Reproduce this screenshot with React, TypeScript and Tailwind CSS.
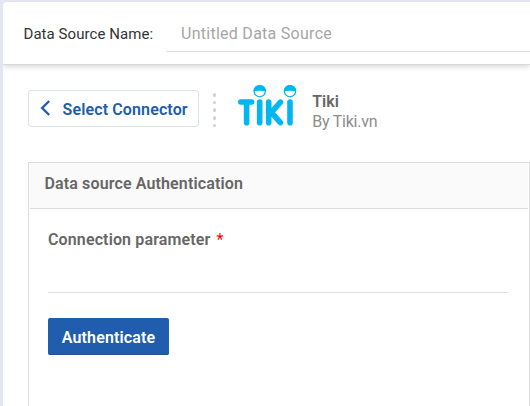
import React from "react";

function TikiLogo() {
  return (
    <svg width="60" height="44" viewBox="0 0 60 44" fill="none" className="block" aria-label="Tiki">
      <g stroke="#00b7f1" strokeWidth="5.6" strokeLinecap="round" strokeLinejoin="round">
        <path d="M3.8 18H14.6M9.6 18V38.8" />
        <path d="M22.7 18V38.8" />
        <path d="M31.7 18V38.8M43.4 18.2L34.4 28.4L43.4 38.6" />
        <path d="M53 18V38.8" />
      </g>
      <g stroke="#00b7f1" strokeWidth="1.3">
        <circle cx="22.7" cy="7.2" r="5.6" fill="#fff" />
        <circle cx="53" cy="7.2" r="5.6" fill="#fff" />
      </g>
      <path d="M16.5 7.2a6.2 6.2 0 0 1 12.4 0q-6.2-1-12.4 0ZM46.8 7.2a6.2 6.2 0 0 1 12.4 0q-6.2-1-12.4 0Z" fill="#00b7f1" />
    </svg>
  );
}

function DotDivider() {
  return (
    <div className="ml-[14px] flex flex-col gap-[4px] pt-[3px]">
      {[0, 1, 2, 3, 4].map((dot) => (
        <span key={dot} className="h-[3.7px] w-[3.2px] rounded-full bg-[#d2d2d2]" />
      ))}
    </div>
  );
}

export default function App() {
  return (
    <div className="h-[406px] w-[530px] overflow-hidden bg-[#e3e5f3] pt-[2px] pl-[3px] font-['Roboto',sans-serif] text-base">
      <main className="h-full overflow-hidden rounded-tl-[4px] bg-white">
        <header className="flex h-[63px] border-b border-[#d9d9d9] pl-[20.5px] shadow-[0_1px_6px_rgba(0,0,0,0.2)]">
          <label className="w-[142.5px] pt-[20px] text-[15px] leading-[24px] tracking-[0.06px] whitespace-nowrap text-[#333]">
            Data Source Name:
          </label>
          <div className="h-[50px] flex-1 border-b border-[#dedede] pt-[20px] pl-[15px] leading-[24px] tracking-[0.27px] text-[#a6a6a6]">
            Untitled Data Source
          </div>
        </header>

        <section className="flex h-[97px] pt-[25px] pl-[25px]">
          <button className="flex h-[37px] w-[171px] items-center rounded-[3px] border border-[#dce3e4] pt-[2px] pl-[10.5px] font-semibold tracking-[0.13px] text-[#205dac]">
            <svg width="11" height="16" viewBox="0 0 11 16" fill="none" className="mt-[-4px] mr-[12px]">
              <path d="M9.2 1L2.2 8L9.2 15" stroke="#205dac" strokeWidth="2.4" />
            </svg>
            Select Connector
          </button>
          <DotDivider />
          <div className="mt-[-6px] ml-[21px]">
            <TikiLogo />
          </div>
          <div className="ml-[15px] pt-[2px] leading-[20px]">
            <div className="font-semibold text-[#666]">Tiki</div>
            <div className="tracking-[-0.22px] text-[#8c8c8c]">By Tiki.vn</div>
          </div>
        </section>

        <section className="ml-[25px] h-[260px] w-[502px] border border-b-0 border-[#dcdcdc] font-semibold tracking-[0.13px] text-[#666]">
          <h2 className="mx-px h-[46px] border-b border-[#dcdcdc] bg-[#fafafa] pt-[9px] pl-[14.5px] leading-[24px]">
            Data source Authentication
          </h2>
          <div className="pt-[19px] pr-[20px] pl-[19px]">
            <label className="block h-[65px] border-b border-[#dce3e4] leading-[24px]">
              Connection parameter <span className="ml-[2px] font-normal text-[#ff0000]">*</span>
            </label>
            <button className="mt-[25px] h-[37px] w-[121px] rounded-[2px] border-b border-[#2f4a93] bg-[#205dac] pt-[3px] text-white">
              Authenticate
            </button>
          </div>
        </section>
      </main>
    </div>
  );
}
